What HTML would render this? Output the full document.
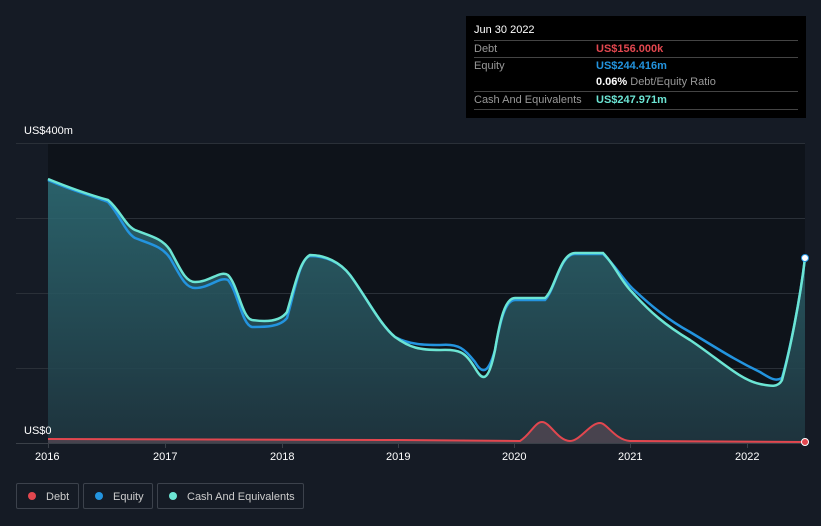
<!DOCTYPE html>
<html><head><style>
body{margin:0;width:821px;height:526px;background:#151b25;font-family:"Liberation Sans",sans-serif;overflow:hidden;position:relative}
.t{position:absolute;color:#fff;font-size:11px}
.tip{position:absolute;left:466px;top:16px;width:340px;height:102px;background:#000;}
.row{position:absolute;left:8px;width:324px;border-top:1px solid #444;font-size:11px;color:#999;height:17px;line-height:17px}
.v{position:absolute;left:122px;font-weight:bold}
.leg{position:absolute;top:483px;height:26px;border:1px solid #3c424c;border-radius:2px;color:#ccc;font-size:11px;line-height:26px;box-sizing:border-box}
.dot{display:inline-block;width:8px;height:8px;border-radius:50%;margin:0 10px 0 11px;vertical-align:-0px}
</style></head><body>
<svg width="821" height="526" style="position:absolute;left:0;top:0">
<rect x="48" y="143" width="757" height="300" fill="#0e131a"/>
<g stroke="#2a3038" stroke-width="1">
<line x1="16" y1="143.5" x2="805" y2="143.5"/><line x1="16" y1="218.5" x2="805" y2="218.5"/><line x1="16" y1="293.5" x2="805" y2="293.5"/><line x1="16" y1="368.5" x2="805" y2="368.5"/>
</g>
<defs><linearGradient id="g" x1="0" y1="0" x2="0" y2="1"><stop offset="0" stop-color="#2f6f78" stop-opacity=".85"/><stop offset="1" stop-color="#1f3640" stop-opacity=".9"/></linearGradient></defs>
<path d="M48,179 C70,188 90,195 108,200 C120,210 125,225 135,230 C150,236 162,238 170,250 C180,268 185,282 195,282 C210,282 220,270 228,275 C238,285 242,318 252,320 C265,322 280,322 287,312 C295,285 300,260 310,255 C325,255 340,262 350,275 C365,295 380,325 395,337 C410,348 420,350 440,350 C460,349 465,352 475,368 C482,380 488,385 495,350 C500,320 505,298 515,298 L545,298 C555,290 560,253 575,253 L603,253 C615,265 620,280 632,292 C650,312 665,325 690,340 C720,360 740,380 760,384 C770,386 778,388 782,380 C790,350 800,300 805,258 L805,443 L48,443 Z" fill="url(#g)"/>
<path d="M48,180 C70,190 90,195 108,202 C120,215 125,232 135,238 C150,244 162,246 170,258 C180,275 185,288 195,288 C210,288 220,276 228,280 C238,292 242,325 252,327 C265,327 280,327 287,318 C295,290 300,258 310,256 C325,256 340,262 350,275 C365,295 380,325 395,337 C410,345 425,345 440,345 C460,343 465,350 475,362 C482,374 488,375 495,350 C500,322 505,300 515,300 L545,300 C555,290 560,254 575,254 L603,254 C615,265 622,278 632,288 C650,305 668,320 690,332 C720,350 735,360 760,372 C770,378 775,382 782,378 C790,350 800,300 805,258" fill="none" stroke="#2394df" stroke-width="2.5"/>
<path d="M48,179 C70,188 90,195 108,200 C120,210 125,225 135,230 C150,236 162,238 170,250 C180,268 185,282 195,282 C210,282 220,270 228,275 C238,285 242,318 252,320 C265,322 280,322 287,312 C295,285 300,260 310,255 C325,255 340,262 350,275 C365,295 380,325 395,337 C410,348 420,350 440,350 C460,349 465,352 475,368 C482,380 488,385 495,350 C500,320 505,298 515,298 L545,298 C555,290 560,253 575,253 L603,253 C615,265 620,280 632,292 C650,312 665,325 690,340 C720,360 740,380 760,384 C770,386 778,388 782,380 C790,350 800,300 805,258" fill="none" stroke="#6ce5d4" stroke-width="2.5"/>
<path d="M48,439 L400,440 L520,441 C530,435 535,422 542,422 C550,422 558,441 570,441 C580,441 590,423 600,423 C607,423 615,440 630,441 L805,442 L805,443 L48,443Z" fill="#5a4a55" opacity=".7"/>
<path d="M48,439 L400,440 L520,441 C530,435 535,422 542,422 C550,422 558,441 570,441 C580,441 590,423 600,423 C607,423 615,440 630,441 L805,442" fill="none" stroke="#e2474f" stroke-width="2"/>
<line x1="16" y1="443.5" x2="805" y2="443.5" stroke="#3a4048"/>
<g stroke="#3a4048"><line x1="48.5" y1="443" x2="48.5" y2="448"/><line x1="165.5" y1="443" x2="165.5" y2="448"/><line x1="282.5" y1="443" x2="282.5" y2="448"/><line x1="398.5" y1="443" x2="398.5" y2="448"/><line x1="514.5" y1="443" x2="514.5" y2="448"/><line x1="630.5" y1="443" x2="630.5" y2="448"/><line x1="747.5" y1="443" x2="747.5" y2="448"/></g>
<circle cx="805" cy="258" r="3.5" fill="#fff" stroke="#2394df"/>
<circle cx="805" cy="442" r="3.5" fill="#e2474f" stroke="#fff"/>
</svg>
<div class="t" style="left:24px;top:125px">US$400m</div>
<div class="t" style="left:24px;top:425px">US$0</div>
<div class="t" style="left:35px;top:451px">2016</div>
<div class="t" style="left:153px;top:451px">2017</div>
<div class="t" style="left:270px;top:451px">2018</div>
<div class="t" style="left:386px;top:451px">2019</div>
<div class="t" style="left:502px;top:451px">2020</div>
<div class="t" style="left:618px;top:451px">2021</div>
<div class="t" style="left:735px;top:451px">2022</div>
<div class="tip">
<div style="position:absolute;left:8px;top:8px;color:#fff;font-size:11px">Jun 30 2022</div>
<div class="row" style="top:24px">Debt<span class="v" style="color:#e2474f">US$156.000k</span></div>
<div class="row" style="top:41px">Equity<span class="v" style="color:#2394df">US$244.416m</span></div>
<div class="row" style="top:58px;border-top:none"><span class="v" style="color:#fff">0.06% <span style="color:#999;font-weight:normal">Debt/Equity Ratio</span></span></div>
<div class="row" style="top:75px">Cash And Equivalents<span class="v" style="color:#6ce5d4">US$247.971m</span></div>
<div class="row" style="top:93px;height:0"></div>
</div>
<div class="leg" style="left:16px;width:63px"><span class="dot" style="background:#e2474f"></span>Debt</div>
<div class="leg" style="left:83px;width:70px"><span class="dot" style="background:#2394df"></span>Equity</div>
<div class="leg" style="left:157px;width:147px"><span class="dot" style="background:#6ce5d4"></span>Cash And Equivalents</div>
</body></html>
